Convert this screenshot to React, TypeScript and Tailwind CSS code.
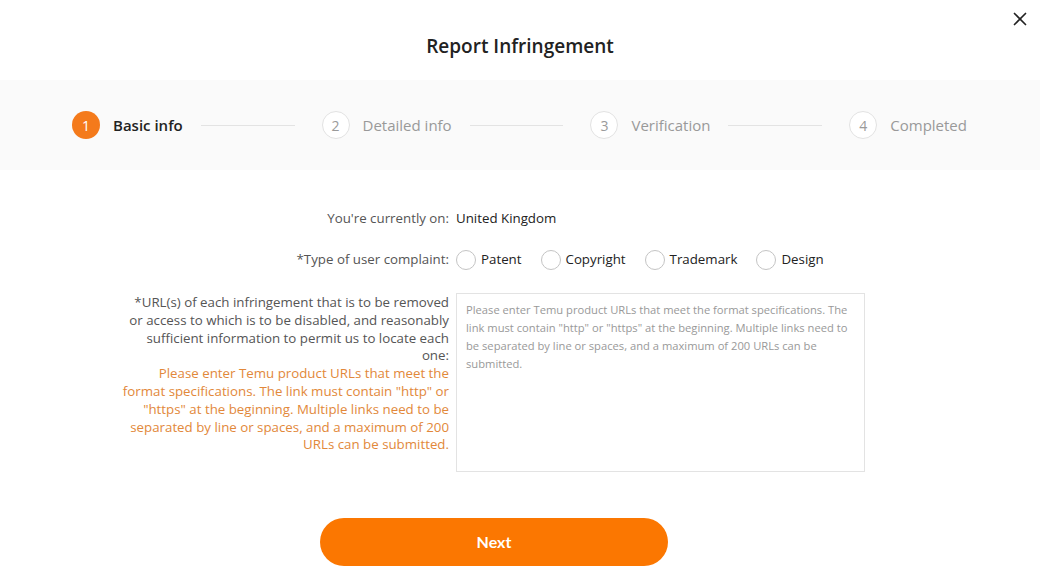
import { Fragment } from 'react';
import { X } from 'lucide-react';

const steps = [
  { n: 1, label: 'Basic info' },
  { n: 2, label: 'Detailed info' },
  { n: 3, label: 'Verification' },
  { n: 4, label: 'Completed' },
];

const complaintTypes = ['Patent', 'Copyright', 'Trademark', 'Design'];

const hint =
  'Please enter Temu product URLs that meet the format specifications. The link must contain "http" or "https" at the beginning. Multiple links need to be separated by line or spaces, and a maximum of 200 URLs can be submitted.';

function Stepper({ current }: { current: number }) {
  return (
    <div className="h-[90px] bg-[#fafafa] flex items-center pl-[72px] pr-[73px]">
      {steps.map((s, i) => {
        const active = s.n === current;
        return (
          <Fragment key={s.n}>
            <div className="flex items-center">
              <div
                className={
                  active
                    ? 'w-[28px] h-[28px] rounded-full bg-[#f47a1b] text-white flex items-center justify-center text-[14px]'
                    : 'w-[28px] h-[28px] rounded-full border border-[#e2e2e2] bg-white text-[#9a9a9a] flex items-center justify-center text-[14px]'
                }
              >
                {s.n}
              </div>
              <span
                className={
                  active
                    ? 'ml-[13px] text-[15px] font-semibold text-[#222]'
                    : 'ml-[13px] text-[15px] text-[#999]'
                }
              >
                {s.label}
              </span>
            </div>
            {i < steps.length - 1 && <div className="flex-1 h-px bg-[#e3e3e3] ml-[18px] mr-[27px]" />}
          </Fragment>
        );
      })}
    </div>
  );
}

export default function App() {
  return (
    <div
      className="relative w-[1040px] h-[584px] bg-white overflow-hidden text-[#333]"
      style={{ fontFamily: '"Open Sans", "Noto Sans", sans-serif' }}
    >
      {/* Close button */}
      <button className="absolute right-[9px] top-[8px] text-[#222]">
        <X size={22} strokeWidth={1.8} />
      </button>

      {/* Title */}
      <div className="h-[80px] flex items-center justify-center pt-[12px]">
        <h1 className="text-[19px] font-semibold text-[#222]">Report Infringement</h1>
      </div>

      <Stepper current={1} />

      {/* Form */}
      <div className="ml-[122px] mt-[39px] flex flex-col text-[13.3px]">
        <div className="flex items-center h-[20px]">
          <div className="w-[327px] text-right text-[#555]">You're currently on:</div>
          <div className="ml-[7px] text-[#222]">United Kingdom</div>
        </div>

        <div className="flex items-center h-[22px] mt-[20px]">
          <div className="w-[327px] text-right text-[#555]">*Type of user complaint:</div>
          <div className="ml-[7px] flex items-center gap-[19px]">
            {complaintTypes.map((t) => (
              <label key={t} className="flex items-center gap-[5px] text-[#222]">
                <span className="w-[20px] h-[20px] rounded-full border border-[#c4c4c4] bg-white" />
                {t}
              </label>
            ))}
          </div>
        </div>

        <div className="flex items-start mt-[22px]">
          <div className="w-[327px] text-right leading-[17.8px] pt-[1px]">
            <div className="text-[#555]">
              *URL(s) of each infringement that is to be removed or access to which is to be disabled, and
              reasonably sufficient information to permit us to locate each one:
            </div>
            <div className="text-[#e2883a]">{hint}</div>
          </div>
          <textarea
            className="ml-[7px] w-[409px] h-[179px] border border-[#e3e3e3] resize-none px-[9px] py-[7px] text-[11.2px] leading-[18px] text-[#333] placeholder:text-[#999] outline-none"
            style={{ fontFamily: '"Open Sans", "Noto Sans", sans-serif' }}
            placeholder={hint}
          />
        </div>

        <div className="mt-[46px] ml-[198px]">
          <button
            className="w-[348px] h-[48px] rounded-full bg-[#fb7701] text-white text-[16px] font-bold"
            style={{ fontFamily: 'Lato, "Open Sans", sans-serif' }}
          >
            Next
          </button>
        </div>
      </div>
    </div>
  );
}
